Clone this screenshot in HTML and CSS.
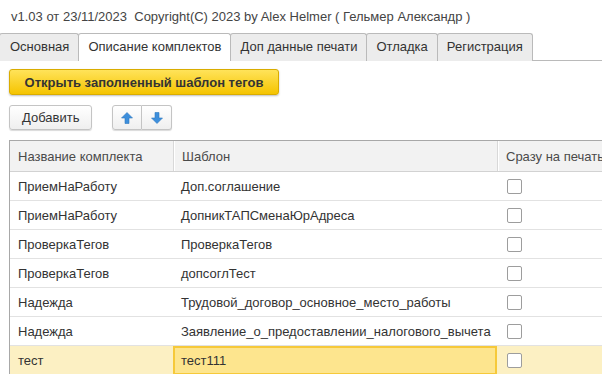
FILE: index.html
```html
<!DOCTYPE html>
<html lang="ru">
<head>
  <meta charset="UTF-8">
  <title>Шаблоны тегов</title>
  <link rel="stylesheet" href="styles.css">
</head>
<body>
  <div class="title">v1.03 от 23/11/2023&nbsp; Copyright(C) 2023 by Alex Helmer ( Гельмер Александр )</div>

  <div class="tabs">
    <div class="tab">Основная</div>
    <div class="tab active">Описание комплектов</div>
    <div class="tab">Доп данные печати</div>
    <div class="tab">Отладка</div>
    <div class="tab">Регистрация</div>
  </div>

  <div class="page">
    <button class="btn-main">Открыть заполненный шаблон тегов</button>

    <div class="toolbar">
      <button class="btn">Добавить</button>
      <div class="btn-group">
        <button class="btn btn-icon" title="Вверх">
          <svg width="12" height="12" viewBox="0 0 12 12"><path d="M6 0.5 L11.5 6 L8 6 L8 11.5 L4 11.5 L4 6 L0.5 6 Z" fill="#3d8fdc" stroke="#2f78c0" stroke-width="0.6"/></svg>
        </button>
        <button class="btn btn-icon" title="Вниз">
          <svg width="12" height="12" viewBox="0 0 12 12"><path d="M6 11.5 L11.5 6 L8 6 L8 0.5 L4 0.5 L4 6 L0.5 6 Z" fill="#3d8fdc" stroke="#2f78c0" stroke-width="0.6"/></svg>
        </button>
      </div>
    </div>

    <div class="grid">
      <div class="row head">
        <div class="cell">Название комплекта</div>
        <div class="cell">Шаблон</div>
        <div class="cell">Сразу на печать</div>
      </div>
      <div class="row">
        <div class="cell">ПриемНаРаботу</div>
        <div class="cell">Доп.соглашение</div>
        <div class="cell"><span class="check"></span></div>
      </div>
      <div class="row">
        <div class="cell">ПриемНаРаботу</div>
        <div class="cell">ДопникТАПСменаЮрАдреса</div>
        <div class="cell"><span class="check"></span></div>
      </div>
      <div class="row">
        <div class="cell">ПроверкаТегов</div>
        <div class="cell">ПроверкаТегов</div>
        <div class="cell"><span class="check"></span></div>
      </div>
      <div class="row">
        <div class="cell">ПроверкаТегов</div>
        <div class="cell">допсоглТест</div>
        <div class="cell"><span class="check"></span></div>
      </div>
      <div class="row">
        <div class="cell">Надежда</div>
        <div class="cell">Трудовой_договор_основное_место_работы</div>
        <div class="cell"><span class="check"></span></div>
      </div>
      <div class="row">
        <div class="cell">Надежда</div>
        <div class="cell">Заявление_о_предоставлении_налогового_вычета</div>
        <div class="cell"><span class="check"></span></div>
      </div>
      <div class="row selected">
        <div class="cell">тест</div>
        <div class="cell current">тест111</div>
        <div class="cell"><span class="check"></span></div>
      </div>
    </div>
  </div>
</body>
</html>
```

FILE: styles.css
```css
:root {
  --text: #333333;
  --border: #bababa;
  --tab-bg: #ececec;
  --row-line: #e2e2e2;
  --font: "Liberation Sans", Arial, sans-serif;
}
* {
  box-sizing: border-box;
}
body {
  margin: 0;
  width: 602px;
  height: 374px;
  overflow: hidden;
  background: #fff;
  font-family: var(--font);
  font-size: 13px;
  color: var(--text);
}
.title {
  height: 33px;
  padding: 9px 0 0 11px;
  line-height: 15px;
  color: #444;
  white-space: nowrap;
}

/* Tabs */
.tabs {
  display: flex;
  height: 28px;
  border-bottom: 1px solid var(--border);
  margin-left: -1px;
}
.tab {
  height: 28px;
  padding: 0 9px;
  line-height: 26px;
  background: var(--tab-bg);
  border: 1px solid var(--border);
  border-bottom: none;
  border-radius: 3px 3px 0 0;
  margin-right: -1px;
  white-space: nowrap;
  color: #333;
}
.tab:first-child {
  padding-left: 10px;
}
.tab.active {
  background: #fff;
  margin-bottom: -1px;
  position: relative;
  z-index: 1;
}

.page {
  padding: 8px 0 0 9px;
}

/* Buttons */
.btn-main {
  display: block;
  width: 270px;
  height: 26px;
  padding: 0;
  font-family: var(--font);
  font-size: 13px;
  font-weight: bold;
  color: #333;
  background: linear-gradient(#ffe35a, #f5c400);
  border: 1px solid #d9ac00;
  border-radius: 3px;
  box-shadow: 0 1px 2px rgba(0,0,0,0.25);
}
.toolbar {
  display: flex;
  align-items: center;
  gap: 20px;
  margin-top: 10px;
}
.btn {
  height: 25px;
  padding: 0 12px;
  font-family: var(--font);
  font-size: 13px;
  color: #333;
  background: linear-gradient(#ffffff, #efefef);
  border: 1px solid #c4c4c4;
  border-radius: 3px;
  box-shadow: 0 1px 1px rgba(0,0,0,0.15);
}
.toolbar > .btn {
  width: 83px;
}
.btn-group {
  display: flex;
  border-radius: 3px;
  box-shadow: 0 1px 1px rgba(0,0,0,0.15);
}
.btn-group .btn {
  box-shadow: none;
}
.btn-icon {
  width: 30px;
  padding: 0;
  display: flex;
  align-items: center;
  justify-content: center;
}
.btn-group .btn:first-child {
  border-radius: 3px 0 0 3px;
}
.btn-group .btn:last-child {
  border-radius: 0 3px 3px 0;
  border-left: none;
}

/* Table */
.grid {
  margin-top: 10px;
  width: 640px;
  border-top: 1px solid #a8a8a8;
  border-left: 1px solid #a8a8a8;
}
.row {
  display: grid;
  grid-template-columns: 163px 324px 1fr;
  height: 29px;
  border-bottom: 1px solid var(--row-line);
}
.row.head {
  height: 31px;
  background: #f2f2f2;
  border-bottom: 1px solid #d2d2d2;
}
.row.head .cell + .cell {
  border-left: 1px solid #d8d8d8;
  box-shadow: inset 1px 0 0 #fff;
}
.cell {
  display: flex;
  align-items: center;
  padding-left: 8px;
  white-space: nowrap;
  overflow: hidden;
}
.row.head .cell {
  color: #4a4a4a;
}
.row.selected {
  background: #fcf0c3;
  border-bottom: none;
}
.cell.current {
  background: #fde58e;
  border: 2px solid #f6c93a;
  padding-left: 6px;
}
.check {
  width: 15px;
  height: 15px;
  margin-left: 2px;
  background: #fff;
  border: 1px solid #9d9d9d;
  border-radius: 2px;
}
```
